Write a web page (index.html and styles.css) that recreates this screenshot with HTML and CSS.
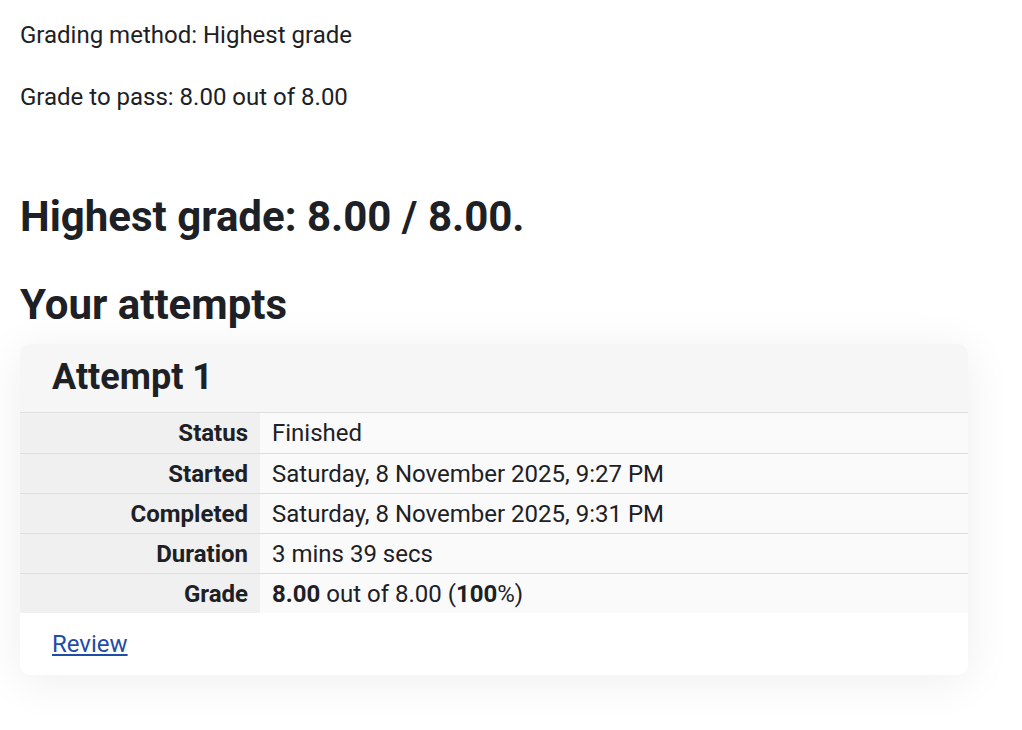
FILE: index.html
```html
<!DOCTYPE html>
<html lang="en">
<head>
    <meta charset="UTF-8">
    <title>Quiz summary</title>
    <link rel="stylesheet" href="styles.css">
</head>
<body>
    <div class="quizinfo">
        <p>Grading method: Highest grade</p>
        <p>Grade to pass: 8.00 out of 8.00</p>
    </div>
    <h3 class="feedback-grade">Highest grade: 8.00 / 8.00.</h3>
    <h3 class="attempts-title">Your attempts</h3>
    <div class="attempt-card">
        <div class="attempt-header">
            <h4>Attempt 1</h4>
        </div>
        <table class="attempt-summary">
            <tr>
                <th>Status</th>
                <td>Finished</td>
            </tr>
            <tr>
                <th>Started</th>
                <td>Saturday, 8 November 2025, 9:27 PM</td>
            </tr>
            <tr>
                <th>Completed</th>
                <td>Saturday, 8 November 2025, 9:31 PM</td>
            </tr>
            <tr>
                <th>Duration</th>
                <td>3 mins 39 secs</td>
            </tr>
            <tr>
                <th>Grade</th>
                <td><b>8.00</b> out of 8.00 (<b>100</b>%)</td>
            </tr>
        </table>
        <div class="attempt-footer">
            <a href="#">Review</a>
        </div>
    </div>
</body>
</html>
```

FILE: styles.css
```css
body {
    font-family: Roboto, "Liberation Sans", sans-serif;
    font-size: 24px;
    line-height: 30px;
    color: #1d2125;
    background: #fff;
    margin: 0;
    padding: 20px 54px 40px 20px;
}
.quizinfo p {
    margin: 0 0 32px 0;
}
h3 {
    font-weight: 700;
    font-size: 42px;
    line-height: 50px;
    margin: 0;
}
.feedback-grade {
    margin-top: 80px;
}
.attempts-title {
    margin-top: 38px;
    margin-bottom: 14px;
}
.attempt-card {
    border-radius: 10px;
    overflow: hidden;
    background: #fff;
    box-shadow: 0 6px 48px rgba(0, 0, 0, 0.07);
}
.attempt-header {
    background: #f6f6f6;
    padding: 11px 32px 13px;
    border-bottom: 1px solid #dedede;
}
.attempt-header h4 {
    margin: 0;
    font-size: 36px;
    line-height: 44px;
    font-weight: 700;
}
.attempt-summary {
    width: 100%;
    border-collapse: collapse;
}
.attempt-summary tr + tr {
    border-top: 1px solid #dedede;
}
.attempt-summary th {
    width: 216px;
    background: #f0f0f0;
    text-align: right;
    padding: 5px 12px 4px;
    font-weight: 700;
}
.attempt-summary td {
    background: #fafafa;
    padding: 5px 12px 4px;
}
.attempt-summary tr:first-child th,
.attempt-summary tr:first-child td {
    padding-bottom: 5px;
}
.attempt-footer {
    padding: 16px 32px;
}
.attempt-footer a {
    color: #1e4da6;
    text-decoration: underline;
}
```
